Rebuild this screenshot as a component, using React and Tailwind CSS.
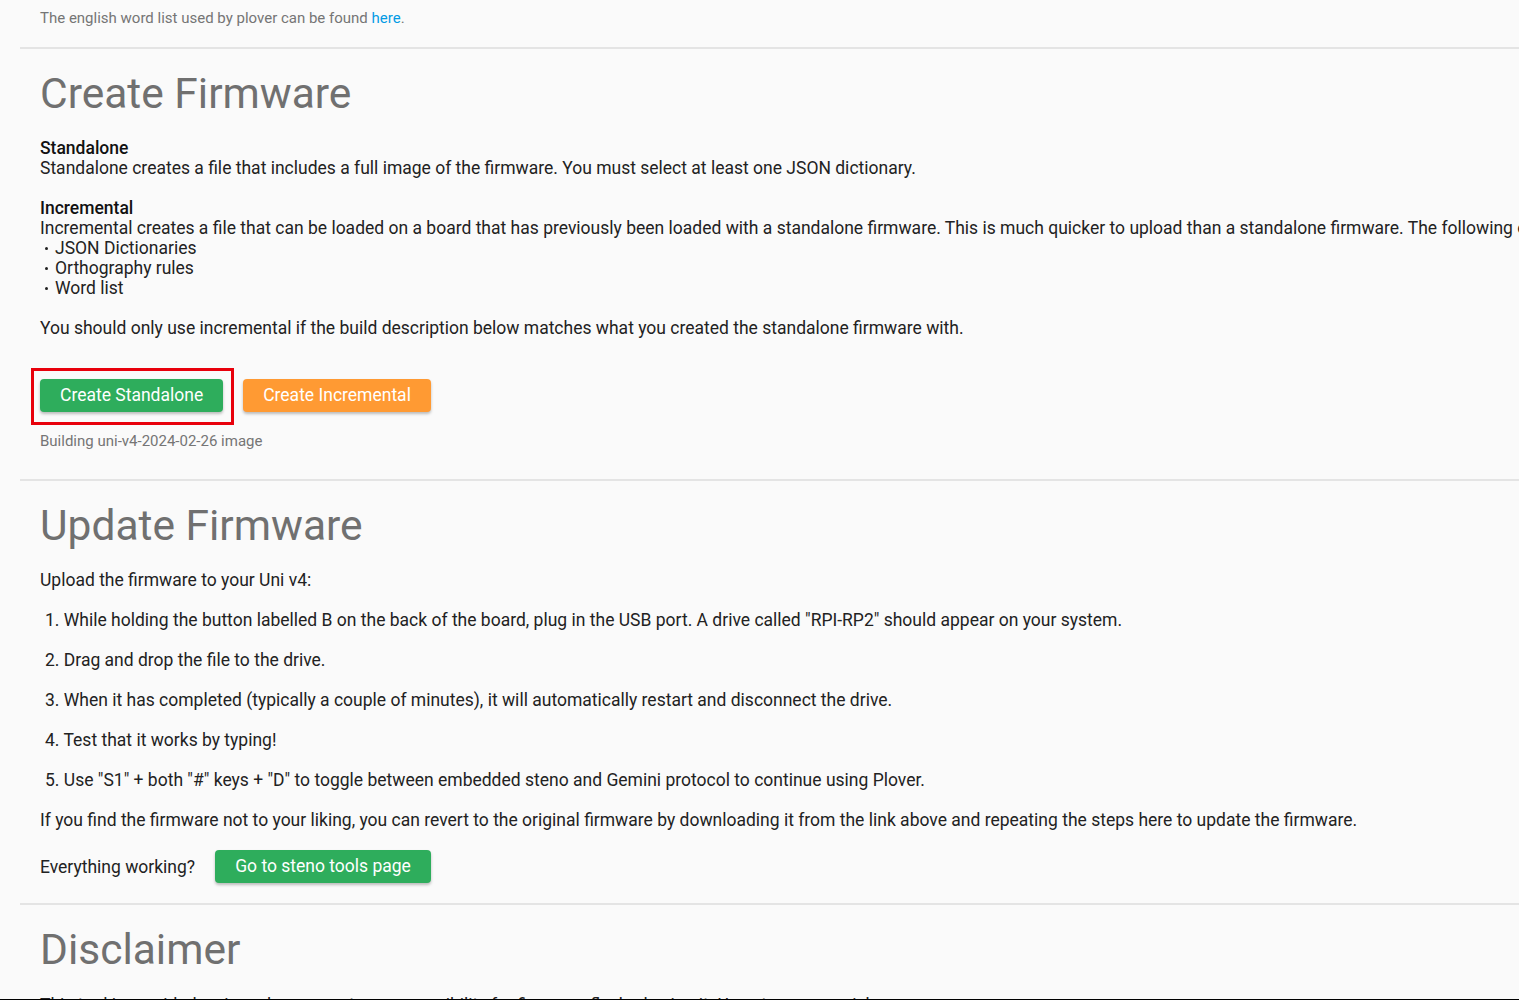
const roboto = { fontFamily: 'Roboto, "Liberation Sans", sans-serif' };

function Heading({ children }) {
  return <h2 className="text-[42.5px] leading-[50px] font-normal text-[#707070]">{children}</h2>;
}

function Button({ color, children }) {
  return (
    <button
      className={
        'h-[33px] px-5 rounded text-white text-[17.5px] leading-[33px] shadow-[0_2px_3px_rgba(0,0,0,0.25)] ' +
        (color === 'orange' ? 'bg-[#ff9a33]' : 'bg-[#2ead5c]')
      }
    >
      {children}
    </button>
  );
}

function Bullet({ children }) {
  return (
    <li className="flex items-center">
      <span className="ml-[5px] mr-[7px] w-[3px] h-[3px] rounded-full bg-[#212121]" />
      {children}
    </li>
  );
}

const steps = [
  'While holding the button labelled B on the back of the board, plug in the USB port. A drive called "RPI-RP2" should appear on your system.',
  'Drag and drop the file to the drive.',
  'When it has completed (typically a couple of minutes), it will automatically restart and disconnect the drive.',
  'Test that it works by typing!',
  'Use "S1" + both "#" keys + "D" to toggle between embedded steno and Gemini protocol to continue using Plover.',
];

export default function App() {
  return (
    <div className="min-h-screen w-full overflow-hidden bg-[#fafafa] text-[#222]" style={roboto}>
      <div className="ml-5 w-[1700px]">
        <p className="pl-5 pt-2 pb-[19px] text-[15px] leading-5 text-[#757575]">
          The english word list used by plover can be found{' '}
          <a href="#" className="text-[#039be5]">here</a>.
        </p>

        <section className="border-t-2 border-[#e4e4e4] pl-5 pt-5 pb-[28px]">
          <Heading>Create Firmware</Heading>
          <div className="mt-[19px] text-[17.5px] leading-5">
            <div className="font-medium text-[#111]">Standalone</div>
            <div>Standalone creates a file that includes a full image of the firmware. You must select at least one JSON dictionary.</div>
            <div className="mt-5 font-medium text-[#111]">Incremental</div>
            <div className="whitespace-nowrap">
              Incremental creates a file that can be loaded on a board that has previously been loaded with a standalone firmware. This is much quicker to upload than a standalone firmware. The following options are not included:
            </div>
            <ul>
              <Bullet>JSON Dictionaries</Bullet>
              <Bullet>Orthography rules</Bullet>
              <Bullet>Word list</Bullet>
            </ul>
            <p className="mt-5">You should only use incremental if the build description below matches what you created the standalone firmware with.</p>
          </div>
          <div className="mt-[41px] flex gap-5">
            <div className="relative">
              <Button>Create Standalone</Button>
              <div className="absolute -left-[9px] -right-[11px] -top-[11px] -bottom-[13px] border-[3px] border-[#e8000b] pointer-events-none" />
            </div>
            <Button color="orange">Create Incremental</Button>
          </div>
          <p className="mt-[19px] text-[15px] leading-5 text-[#757575]">Building uni-v4-2024-02-26 image</p>
        </section>

        <section className="border-t-2 border-[#e4e4e4] pl-5 pt-5 pb-5">
          <Heading>Update Firmware</Heading>
          <div className="text-[17.5px] leading-5">
            <p className="mt-[19px]">Upload the firmware to your Uni v4:</p>
            <ol>
              {steps.map((s, i) => (
                <li key={i} className="mt-5 pl-[5px]">{i + 1}. {s}</li>
              ))}
            </ol>
            <p className="mt-5">If you find the firmware not to your liking, you can revert to the original firmware by downloading it from the link above and repeating the steps here to update the firmware.</p>
            <div className="mt-5 flex items-center gap-5">
              <span>Everything working?</span>
              <Button>Go to steno tools page</Button>
            </div>
          </div>
        </section>

        <section className="border-t-2 border-[#e4e4e4] pl-5 pt-5 pb-5">
          <Heading>Disclaimer</Heading>
          <p className="mt-5 text-[17.5px] leading-5">
            This tool is provided as-is and we accept no responsibility for firmware flashed using it. Use at your own risk.
          </p>
        </section>
      </div>
      <div className="fixed bottom-0 left-0 right-0 h-px bg-black" />
    </div>
  );
}
